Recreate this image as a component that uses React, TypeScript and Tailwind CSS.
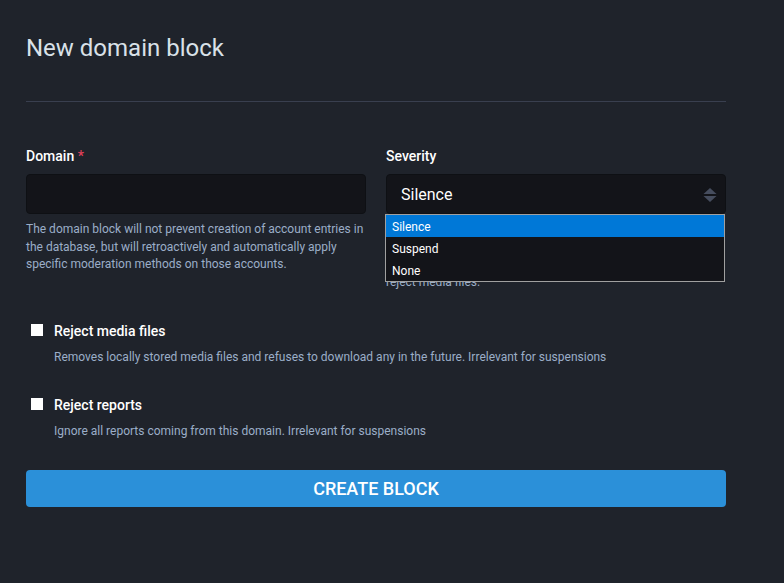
import React from "react";

export default function App() {
  return (
    <div
      className="min-h-[583px] w-full bg-[#1f232b] pl-[26px] pt-[34px]"
      style={{ fontFamily: "Roboto, 'Noto Sans', sans-serif" }}
    >
      <div className="w-[700px]">
        <h2 className="text-[24px] leading-[28px] font-normal text-[#d9e1e8]">New domain block</h2>
        <div className="mt-[39px] h-px bg-[#393f4f]" />

        <div className="mt-[44px] grid grid-cols-2 gap-[20px]">
          <div>
            <label className="block text-[14px] leading-[20px] font-medium text-white">
              Domain <span className="text-[#df405a]">*</span>
            </label>
            <div className="mt-[8px] h-[40px] rounded-[4px] border border-[#0e1014] bg-[#131419]" />
            <p className="mt-[7px] text-[12px] leading-[17.5px] text-[#9baec8]">
              The domain block will not prevent creation of account entries in the database, but will retroactively and automatically apply specific moderation methods on those accounts.
            </p>
          </div>
          <div className="relative">
            <label className="block text-[14px] leading-[20px] font-medium text-white">Severity</label>
            <div className="relative mt-[8px] flex h-[40px] items-center rounded-[4px] border border-[#0e1014] bg-[#131419] pl-[14px] pt-[2px] text-[16px] text-white">
              Silence
              <svg className="absolute right-[8px] top-[13px]" width="14" height="14" viewBox="0 0 14 14">
                <path d="M7 0 L13.5 6 L0.5 6 Z" fill="#464d5e" />
                <path d="M7 14 L13.5 8 L0.5 8 Z" fill="#464d5e" />
              </svg>
            </div>
            <p className="mt-[7px] text-[12px] leading-[17.5px] text-[#9baec8]">
              Silence will make the account's posts invisible to anyone who isn't following them. Suspend will remove all of the account's content, media, and profile data. Use None if you just want to
              <br />
              reject media files.
            </p>
            <div className="absolute left-[-1px] top-[68px] w-[340px] border border-[#a0a0a0] bg-[#131419] text-[12px] text-white">
              <div className="flex h-[22px] items-center bg-[#0078d7] pl-[6px] pt-px">Silence</div>
              <div className="flex h-[22px] items-center pl-[6px] pt-px">Suspend</div>
              <div className="flex h-[22px] items-center pl-[6px] pt-px">None</div>
            </div>
          </div>
        </div>

        <div className="mt-[30px] flex items-start">
          <div className="ml-[5px] mt-[3px] h-[12px] w-[12px] bg-white" />
          <div className="ml-[11px]">
            <div className="text-[14px] leading-[20px] font-medium text-white">Reject media files</div>
            <div className="mt-[7px] text-[12px] leading-[18px] text-[#9baec8]">
              Removes locally stored media files and refuses to download any in the future. Irrelevant for suspensions
            </div>
          </div>
        </div>

        <div className="mt-[29px] flex items-start">
          <div className="ml-[5px] mt-[3px] h-[12px] w-[12px] bg-white" />
          <div className="ml-[11px]">
            <div className="text-[14px] leading-[20px] font-medium text-white">Reject reports</div>
            <div className="mt-[7px] text-[12px] leading-[18px] text-[#9baec8]">
              Ignore all reports coming from this domain. Irrelevant for suspensions
            </div>
          </div>
        </div>

        <button className="mt-[30px] flex h-[37px] w-full items-center justify-center rounded-[4px] bg-[#2b90d9] text-[18px] font-medium uppercase text-white">
          Create block
        </button>
      </div>
    </div>
  );
}
